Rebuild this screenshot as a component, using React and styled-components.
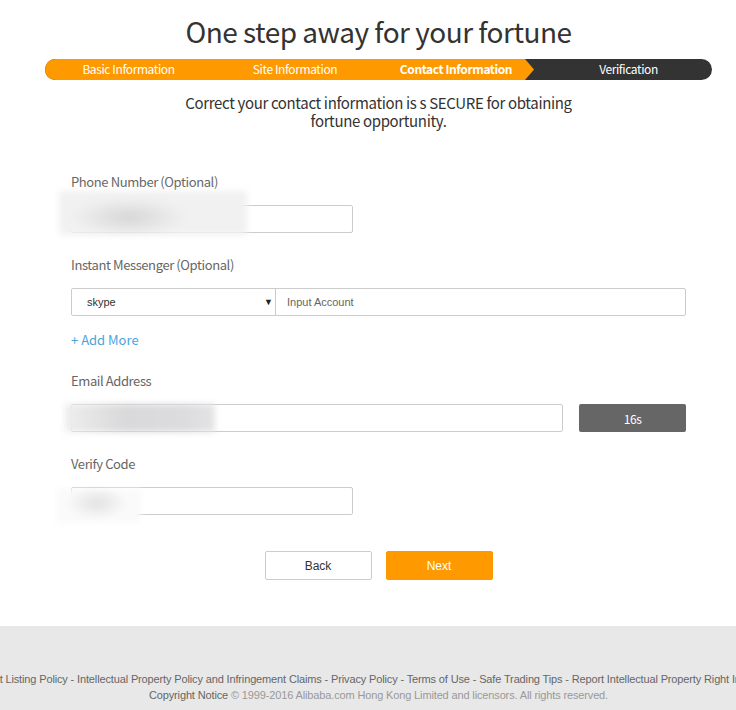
import React from "react";
import styled, { createGlobalStyle } from "styled-components";

const GlobalStyle = createGlobalStyle`
  html, body { margin: 0; padding: 0; background: #fff; overflow-x: hidden; }
  body {
    font-family: "Noto Sans CJK KR", "Noto Sans", Arial, sans-serif;
    color: #333;
    letter-spacing: -0.4px;
  }
  * { box-sizing: border-box; }
`;

const Main = styled.div`
  width: 736px;
  padding-left: 21px;
  display: flex;
  flex-direction: column;
  align-items: center;
`;

const Title = styled.h1`
  margin: 0;
  padding-top: 11px;
  font-size: 28px;
  font-weight: 400;
  line-height: 40px;
  letter-spacing: -0.5px;
  color: #333;
`;

const StepBar = styled.div`
  margin-top: 8px;
  width: 667px;
  height: 21px;
  border-radius: 11px;
  overflow: hidden;
  background: #333;
  display: grid;
  grid-template-columns: 167px 166px 167px 167px;
`;

const Step = styled.div`
  font-size: 12px;
  line-height: 20px;
  text-align: center;
  color: #fff;
  font-weight: ${(p) => (p.$current ? 700 : 400)};
  background: ${(p) => (p.$done || p.$current ? "#ff9900" : "transparent")};
  ${(p) =>
    p.$current &&
    `clip-path: polygon(0 0, 147px 0, 156px 50%, 147px 100%, 0 100%);
     padding-right: 11px;`}
`;

const Subtitle = styled.p`
  margin: 14px 0 0;
  width: 420px;
  text-align: center;
  font-size: 15px;
  line-height: 18px;
  letter-spacing: -0.35px;
  color: #333;
`;

const Form = styled.div`
  width: 615px;
  margin-top: 43px;
  display: flex;
  flex-direction: column;
`;

const Field = styled.div`
  display: flex;
  flex-direction: column;
  margin-top: ${(p) => (p.$first ? "0" : "23px")};
`;

const Label = styled.div`
  font-size: 13px;
  line-height: 18px;
  color: #666;
  margin-bottom: 14px;
`;

const InputWrap = styled.div`
  position: relative;
  width: ${(p) => p.$w || "282px"};
  height: 28px;
`;

const TextInput = styled.div`
  width: 100%;
  height: 28px;
  border: 1px solid #ccc;
  border-radius: 2px;
  background: #fff;
`;

const Blur = styled.div`
  position: absolute;
  pointer-events: none;
  filter: blur(3px);
`;

const ComboRow = styled.div`
  display: flex;
  width: 615px;
  height: 28px;
  border: 1px solid #ccc;
  border-radius: 2px;
  font-family: "Liberation Sans", Arial, sans-serif;
  letter-spacing: 0;
`;

const SelectBox = styled.div`
  width: 204px;
  display: flex;
  align-items: center;
  justify-content: space-between;
  padding: 0 2px 0 15px;
  border-right: 1px solid #ccc;
  font-size: 11px;
  color: #333;
`;

const Caret = styled.span`
  font-size: 9px;
  color: #222;
`;

const Account = styled.div`
  flex: 1;
  display: flex;
  align-items: center;
  padding-left: 11px;
  font-size: 11px;
  color: #666;
`;

const AddMore = styled.div`
  margin-top: 15px;
  font-size: 13px;
  line-height: 18px;
  letter-spacing: 0;
  color: #4ba3db;
`;

const EmailRow = styled.div`
  display: flex;
  gap: 16px;
`;

const CountButton = styled.div`
  width: 107px;
  height: 28px;
  border-radius: 2px;
  background: #666;
  color: #fff;
  font-size: 12px;
  display: flex;
  align-items: center;
  justify-content: center;
`;

const Actions = styled.div`
  margin-top: 36px;
  display: flex;
  gap: 14px;
  font-family: "Liberation Sans", Arial, sans-serif;
  letter-spacing: 0;
`;

const Button = styled.div`
  width: 107px;
  height: 29px;
  border-radius: 2px;
  font-size: 12px;
  display: flex;
  align-items: center;
  justify-content: center;
  background: ${(p) => (p.$primary ? "#ff9900" : "#fff")};
  color: ${(p) => (p.$primary ? "#fff" : "#333")};
  border: 1px solid ${(p) => (p.$primary ? "#ff9900" : "#ccc")};
`;

const Footer = styled.footer`
  margin-top: 46px;
  height: 84px;
  background: #e8e8e8;
  padding: 45px 0 0 21px;
  width: 736px;
  overflow: hidden;
  font-family: "Liberation Sans", Arial, sans-serif;
  font-size: 11px;
  letter-spacing: -0.14px;
  line-height: 16px;
`;

const FooterLine = styled.div`
  display: flex;
  justify-content: center;
  white-space: nowrap;
  color: ${(p) => (p.$muted ? "#999" : "#666")};
`;

const Strong = styled.span`
  color: #666;
  white-space: pre;
`;

export default function App() {
  return (
    <>
      <GlobalStyle />
      <Main>
        <Title>One step away for your fortune</Title>
        <StepBar>
          <Step $done>Basic Information</Step>
          <Step $done>Site Information</Step>
          <Step $current>Contact Information</Step>
          <Step>Verification</Step>
        </StepBar>
        <Subtitle>
          Correct your contact information is s SECURE for obtaining fortune opportunity.
        </Subtitle>
        <Form>
          <Field $first>
            <Label>Phone Number (Optional)</Label>
            <InputWrap>
              <TextInput />
              <Blur
                style={{
                  left: -12,
                  top: -14,
                  width: 188,
                  height: 44,
                  background:
                    "radial-gradient(ellipse 60px 20px at 70px 26px, #d6d6d6, #eaeaea 70%, #f1f1f1)",
                }}
              />
            </InputWrap>
          </Field>
          <Field>
            <Label>Instant Messenger (Optional)</Label>
            <ComboRow>
              <SelectBox>
                skype <Caret>▼</Caret>
              </SelectBox>
              <Account>Input Account</Account>
            </ComboRow>
          </Field>
          <AddMore>+ Add More</AddMore>
          <Field>
            <Label>Email Address</Label>
            <EmailRow>
              <InputWrap $w="492px">
                <TextInput />
                <Blur
                  style={{
                    left: -6,
                    top: 0,
                    width: 150,
                    height: 28,
                    background: "linear-gradient(90deg, #eeeeee, #d9d9db 40%, #dcdcde 80%, #e4e4e6)",
                  }}
                />
              </InputWrap>
              <CountButton>16s</CountButton>
            </EmailRow>
          </Field>
          <Field>
            <Label>Verify Code</Label>
            <InputWrap>
              <TextInput />
              <Blur
                style={{
                  left: -14,
                  top: 2,
                  width: 84,
                  height: 34,
                  background:
                    "radial-gradient(ellipse 30px 16px at 40px 14px, #e2e2e2, #f2f2f2 70%, #fafafa)",
                }}
              />
            </InputWrap>
          </Field>
        </Form>
        <Actions>
          <Button>Back</Button>
          <Button $primary>Next</Button>
        </Actions>
      </Main>
      <Footer>
        <FooterLine>
          Product Listing Policy - Intellectual Property Policy and Infringement Claims - Privacy Policy - Terms of Use - Safe Trading Tips - Report Intellectual Property Right Infringement
        </FooterLine>
        <FooterLine $muted>
          <Strong>Copyright Notice </Strong>© 1999-2016 Alibaba.com Hong Kong Limited and licensors. All rights reserved.
        </FooterLine>
      </Footer>
    </>
  );
}
